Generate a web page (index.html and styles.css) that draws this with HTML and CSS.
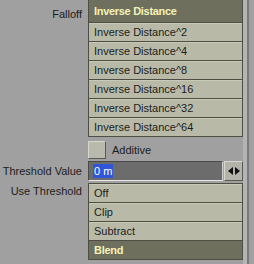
FILE: index.html
```html
<!DOCTYPE html>
<html lang="en">
<head>
    <meta charset="UTF-8">
    <title>Falloff</title>
    <link rel="stylesheet" href="styles.css">
</head>
<body>
    <div class="panel">
        <div class="form">
            <div class="row">
                <div class="label label-top">Falloff</div>
                <div class="list">
                    <div class="item selected">Inverse Distance</div>
                    <div class="item">Inverse Distance^2</div>
                    <div class="item">Inverse Distance^4</div>
                    <div class="item">Inverse Distance^8</div>
                    <div class="item">Inverse Distance^16</div>
                    <div class="item">Inverse Distance^32</div>
                    <div class="item">Inverse Distance^64</div>
                </div>
            </div>

            <div class="row check-row">
                <div class="label"></div>
                <div class="check">
                    <div class="box"></div>
                    <span>Additive</span>
                </div>
            </div>

            <div class="row field-row">
                <div class="label">Threshold Value</div>
                <div class="field">
                    <div class="input"><span class="sel">0 m</span></div>
                    <div class="spin">
                        <svg width="12" height="8" viewBox="0 0 12 8">
                            <polygon points="0,4 5,0 5,8" fill="#111"/>
                            <polygon points="12,4 7,0 7,8" fill="#111"/>
                        </svg>
                    </div>
                </div>
            </div>

            <div class="row">
                <div class="label">Use Threshold</div>
                <div class="list small">
                    <div class="item">Off</div>
                    <div class="item">Clip</div>
                    <div class="item">Subtract</div>
                    <div class="item selected">Blend</div>
                </div>
            </div>
        </div>
        <div class="edge"></div>
    </div>
</body>
</html>
```

FILE: styles.css
```css
body {
    margin: 0;
    background: #a0a0a0;
    font-family: "Liberation Sans", Arial, sans-serif;
    font-size: 11px;
    color: #1c1c1c;
}
.panel {
    display: flex;
    height: 264px;
}
.form {
    width: 243px;
    display: flex;
    flex-direction: column;
}
.row {
    display: flex;
}
.label {
    width: 82px;
    padding-right: 6px;
    text-align: right;
    line-height: 20px;
    white-space: nowrap;
}
.label-top {
    line-height: 28px;
}
.list {
    flex: 1;
    border: 1px solid #4e4e44;
    border-top: none;
    background: #b8baa7;
}
.item {
    height: 18px;
    line-height: 18px;
    padding-left: 5px;
    border-top: 1px solid #4e4e44;
    box-shadow: inset 0 1px 0 #c8cab8;
}
.list .item:first-child {
    border-top: none;
    height: 22px;
    line-height: 23px;
}
.item.selected {
    background: #6e6f5c;
    color: #f4f2b8;
    font-weight: bold;
    letter-spacing: -0.3px;
    box-shadow: none;
}
.small .item:first-child {
    border-top: 1px solid #4e4e44;
    height: 18px;
    line-height: 18px;
}
.small {
    margin-top: 2px;
}
.check-row {
    margin-top: 3px;
    height: 20px;
}
.check {
    display: flex;
    align-items: center;
    gap: 6px;
}
.box {
    width: 16px;
    height: 16px;
    background: #b9b9ae;
    border: 1px solid;
    border-color: #d8d8d0 #5a5a52 #5a5a52 #d8d8d0;
}
.field-row {
    margin-top: 1px;
}
.field {
    flex: 1;
    display: flex;
    height: 20px;
}
.input {
    flex: 1;
    background: #6c6c6c;
    border-top: 1px solid #4a4a4a;
    border-left: 1px solid #4a4a4a;
    border-bottom: 1px solid #e8e8e8;
    border-right: 1px solid #d0d0d0;
    padding-left: 4px;
    line-height: 18px;
}
.sel {
    background: #2f56d8;
    color: #fff;
    padding: 1px 1px;
}
.spin {
    width: 17px;
    margin-left: 1px;
    background: #b3b3aa;
    border: 1px solid;
    border-color: #d8d8d0 #5a5a52 #5a5a52 #d8d8d0;
    display: flex;
    align-items: center;
    justify-content: center;
}
.edge {
    width: 4px;
    background: #b4b4b4;
    border-right: 2px solid #7a7a7a;
}
```
